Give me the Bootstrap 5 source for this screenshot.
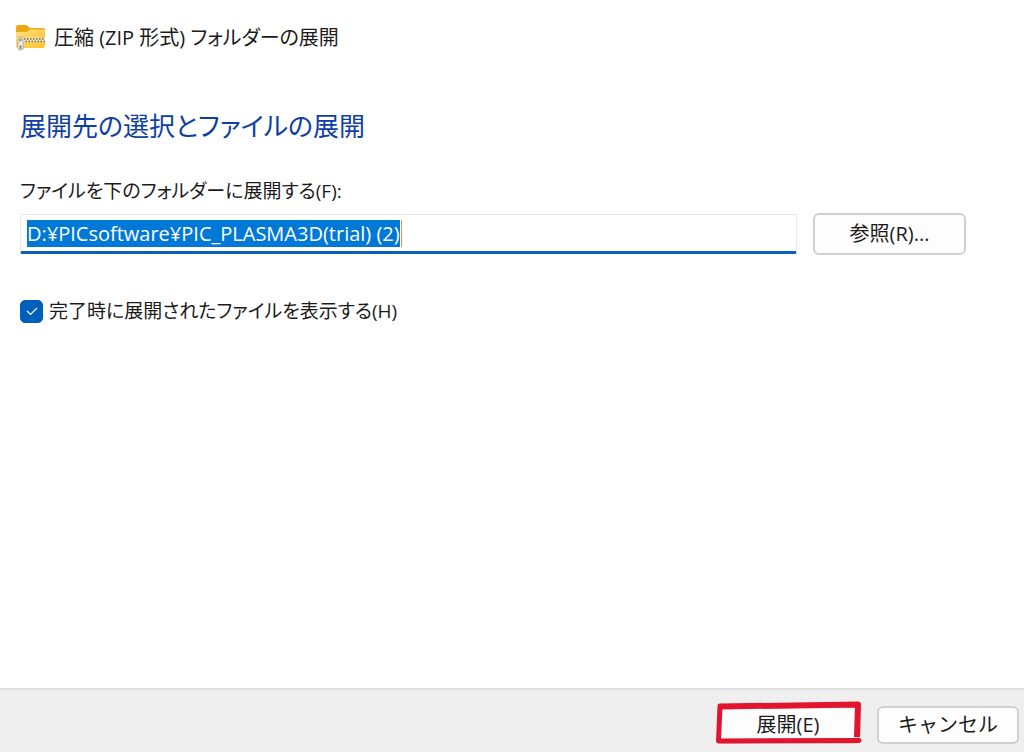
<!DOCTYPE html>
<html lang="ja">
<head>
<meta charset="utf-8">
<meta name="viewport" content="width=device-width, initial-scale=1">
<title>圧縮 (ZIP 形式) フォルダーの展開</title>
<link href="https://cdn.jsdelivr.net/npm/bootstrap@5.3.0/dist/css/bootstrap.min.css" rel="stylesheet">
<style>
  body {
    font-family: "Open Sans", "Noto Sans CJK JP", sans-serif;
    font-feature-settings: "palt";
    font-size: 19px;
    line-height: 28px;
    color: #1b1b1b;
    background: #fff;
  }
  .wizard-title { padding: 24px 16px 0; gap: 8px; font-size: 20px; }
  .wizard-body { padding: 56px 20px 0; }
  .wizard-heading { font-size: 26px; line-height: 36px; font-weight: 400; color: #0f3fa3; margin-bottom: 33px; }
  .path-label { margin-bottom: 8px; }
  .path-row { gap: 16px; padding-right: 38px; }
  .path-input.form-control {
    font-size: 20px; line-height: 28px; height: 40px; padding: 4px 6px;
    border: 1px solid #e8e8e8; border-bottom: 3px solid #0a61bd; border-radius: 2px;
    color: #1b1b1b; box-shadow: none;
    background: linear-gradient(#f08a3c, #f08a3c) 380px 5px / 1px 27px no-repeat #fff;
  }
  .path-input::selection { background: #0078d7; color: #fff; }
  .dialog-btn.btn {
    --bs-btn-bg: #fdfdfd; --bs-btn-border-color: #d0d0d0; --bs-btn-color: #1b1b1b;
    --bs-btn-hover-bg: #f5f5f5; --bs-btn-hover-border-color: #c4c4c4;
    --bs-btn-border-radius: 6px;
    font-size: 20px; line-height: 28px; padding: 0; border-width: 2px;
  }
  .browse-btn { width: 153px; height: 42px; }
  .footer-btn { width: 142px; height: 38px; }
  .show-files { gap: 6px; margin-top: 42px; }
  .show-files .form-check-input {
    width: 23px; height: 23px; border-radius: 5px; border-color: #005fb8;
    background-size: 16px 16px;
  }
  .show-files .form-check-input:checked {
    background-color: #005fb8;
    background-image: url("data:image/svg+xml,%3csvg xmlns='http://www.w3.org/2000/svg' viewBox='0 0 16 16'%3e%3cpath d='M3 8l3.5 3.5L13 5' fill='none' stroke='%23fff' stroke-width='1.2'/%3e%3c/svg%3e");
  }
  .wizard-footer { background: #efefef; border-top: 2px solid #dfdfdf; padding: 16px 5px 8px; gap: 18px; }
  .marker { left: -2px; top: -5px; width: 148px; height: 44px; pointer-events: none; }
</style>
</head>
<body>
<div class="d-flex flex-column min-vh-100">
  <header class="wizard-title d-flex align-items-center">
    <svg width="30" height="28" viewBox="0 0 30 28" aria-hidden="true">
      <defs><linearGradient id="folder" x1="0" y1="0" x2="1" y2="1"><stop offset="0" stop-color="#ffdf7c"/><stop offset="1" stop-color="#fac32f"/></linearGradient></defs>
      <path d="M0 3Q0 1 2.500 1H10.500L14 4H27Q29 4 29 6V14H0Z" fill="#eda914"/>
      <path d="M0 8H10.500L14 5.500H27Q29 5.500 29 7.500V22Q29 24 27 24H2Q0 24 0 22Z" fill="url(#folder)"/>
      <path d="M6 16H29" stroke="#f0dfac" stroke-width="5"/>
      <path d="M8 15H29M9.500 17.500H29" stroke="#7d6c4b" stroke-width="1.500" stroke-dasharray="1.500 1.500"/>
      <path d="M2.500 13H6.500L7.500 24L6 26H3L1.500 24Z" fill="#e7e7e7" stroke="#aaa49a" stroke-width=".7"/>
      <path d="M3.500 14.500H5.500V17H3.500ZM3.500 21.500H5.500V25H3.500Z" fill="#8b8b8b"/>
    </svg>
    <span>圧縮 (ZIP 形式) フォルダーの展開</span>
  </header>
  <main class="wizard-body flex-grow-1">
    <h1 class="wizard-heading">展開先の選択とファイルの展開</h1>
    <label class="path-label d-block" for="path">ファイルを下のフォルダーに展開する(F):</label>
    <div class="path-row d-flex align-items-center">
      <input class="path-input form-control flex-grow-1" id="path" type="text" value="D:¥PICsoftware¥PIC_PLASMA3D(trial) (2)" spellcheck="false">
      <button class="dialog-btn browse-btn btn flex-shrink-0" type="button">参照(R)...</button>
    </div>
    <div class="show-files d-flex align-items-center">
      <input class="form-check-input m-0 flex-shrink-0" id="show" type="checkbox" checked>
      <label for="show">完了時に展開されたファイルを表示する(H)</label>
    </div>
  </main>
  <footer class="wizard-footer d-flex justify-content-end">
    <div class="position-relative">
      <button class="dialog-btn footer-btn btn" type="button">展開(E)</button>
      <svg class="marker position-absolute" viewBox="0 0 148 44" aria-hidden="true">
        <path d="M5 5.500L143 3.500L142 36" fill="none" stroke="#e3142d" stroke-width="6" stroke-linejoin="round"/>
        <path d="M5 5L3.500 40L144 39.500" fill="none" stroke="#e3142d" stroke-width="5" stroke-linecap="round" stroke-linejoin="round"/>
      </svg>
    </div>
    <button class="dialog-btn footer-btn btn" type="button">キャンセル</button>
  </footer>
</div>
<script src="https://cdn.jsdelivr.net/npm/bootstrap@5.3.0/dist/js/bootstrap.bundle.min.js"></script>
<script>
  const path = document.getElementById('path');
  path.focus();
  path.select();
</script>
</body>
</html>
